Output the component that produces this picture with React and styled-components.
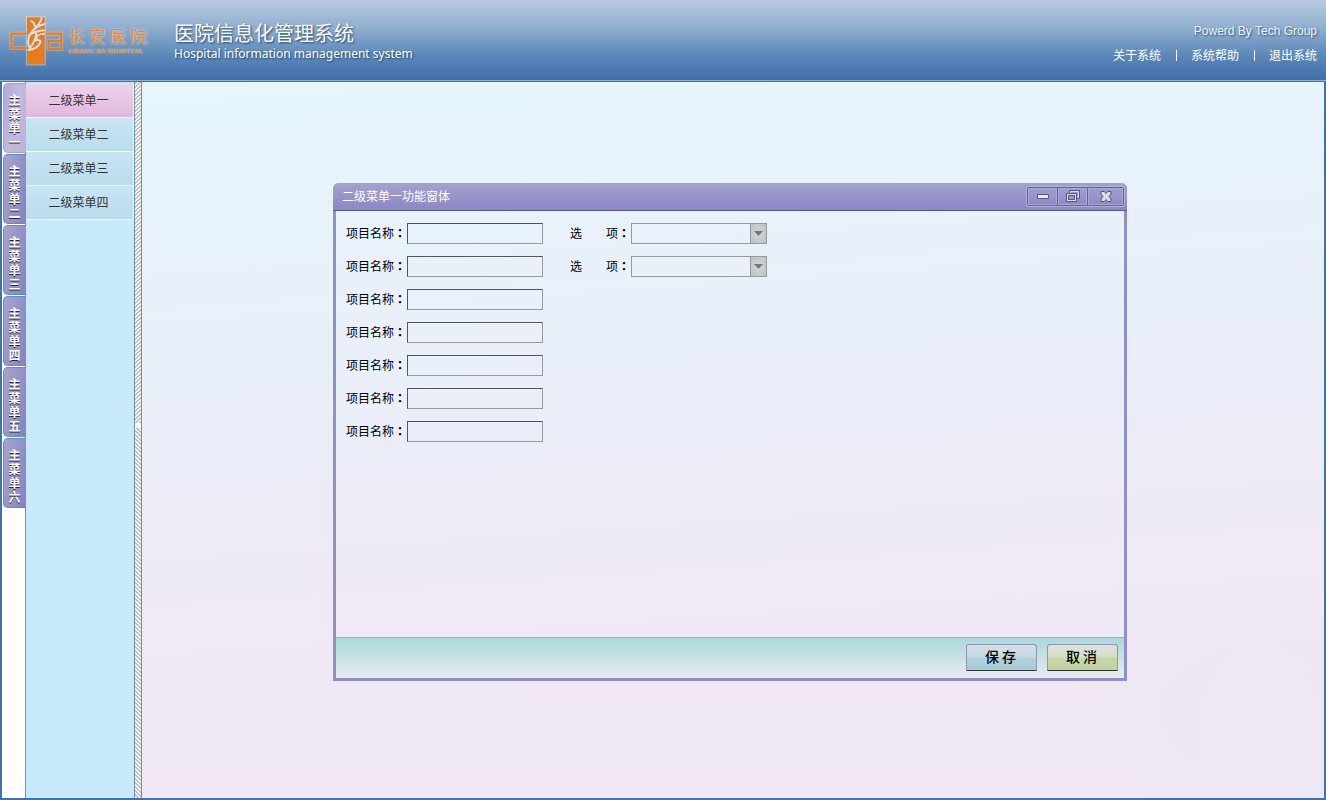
import { useState } from 'react';
import styled, { createGlobalStyle, css } from 'styled-components';

const GlobalStyle = createGlobalStyle`
  *,
  *::before,
  *::after {
    box-sizing: border-box;
  }

  body {
    margin: 0;
    font-family: 'Liberation Sans', 'Noto Sans CJK SC', sans-serif;
    font-size: 12px;
    line-height: 16px;
    color: #000;
  }

  button,
  input,
  select {
    font: inherit;
    color: inherit;
  }
`;

const Page = styled.div`
  display: flex;
  flex-direction: column;
  min-height: 100vh;
  background: #4272aa;
`;

/* Header */

const Header = styled.header`
  display: flex;
  align-items: flex-start;
  height: 81px;
  padding: 14px 9px 0 8px;
  background: linear-gradient(#bacbe0, #8faed0 35%, #5d89ba 68%, #4070a8);
  border-bottom: 1px solid #92aed0;
`;

const Logo = styled.div`
  display: flex;
  align-items: flex-start;
  width: 166px;
  gap: 4px;
  color: #ee8a2c;
`;

const LogoText = styled.div`
  padding-top: 12px;
  white-space: nowrap;
  text-shadow: 0 0 2px rgba(255, 240, 225, 0.8);
`;

const LogoName = styled.div`
  font-family: 'Noto Sans CJK SC', sans-serif;
  font-size: 17px;
  line-height: 20px;
`;

const LogoLatin = styled.div`
  font-family: 'Liberation Serif', serif;
  font-size: 7px;
  font-weight: 700;
  line-height: 10px;
`;

const Heading = styled.div`
  flex: 1;
  padding-top: 7px;
  color: #fff;
  text-shadow: 1px 1px 2px rgba(20, 45, 80, 0.8);
`;

const Title = styled.h1`
  margin: 0;
  font-family: 'Noto Sans CJK SC', sans-serif;
  font-size: 20px;
  font-weight: 400;
  line-height: 24px;
`;

const Subtitle = styled.p`
  margin: 0;
  font-family: 'Noto Sans', sans-serif;
  font-size: 12px;
  line-height: 18px;
`;

const HeaderSide = styled.div`
  display: flex;
  flex-direction: column;
  align-items: flex-end;
  gap: 9px;
  padding-top: 9px;
  color: #fff;
`;

const Powered = styled.div`
  color: #f0f3f8;
  text-shadow: 1px 1px 2px rgba(20, 45, 80, 0.7);
`;

const HeaderNav = styled.nav`
  display: flex;
  align-items: center;
`;

const HeaderLink = styled.a`
  color: #fff;
  text-decoration: none;

  &:not(:last-child)::after {
    content: '';
    display: inline-block;
    width: 1px;
    height: 11px;
    margin: 0 14px 0 15px;
    vertical-align: -1px;
    background: #fff;
  }
`;

/* Left navigation */

const Main = styled.div`
  flex: 1;
  display: flex;
  margin: 1px 2px 2px;
  background: #fff;
`;

const MainMenu = styled.nav`
  display: flex;
  flex-direction: column;
  gap: 1px;
  width: 24px;
  padding: 1px 0 0 1px;
  border-right: 1px solid #6a93c4;
`;

const MainTab = styled.button`
  width: 23px;
  height: 70px;
  padding: 10px 5px 2px 4px;
  border: 1px solid #5f8fc2;
  border-right: none;
  border-radius: 5px 0 0 5px;
  background: linear-gradient(100deg, #a5a5cf, #9594c8 50%, #8482c0);
  color: #fff;
  font-weight: 700;
  line-height: 14px;
  text-shadow: 0 1px 0 #25253c;
  cursor: pointer;

  ${({ $active }) =>
    $active &&
    css`
      border-color: #a99fd3;
      background: linear-gradient(100deg, #b0a8da, #c2b9e0 50%, #bcb2d9);
    `}
`;

const SubMenu = styled.nav`
  width: 108px;
  padding-top: 2px;
  background: #c8e9fb;
`;

const SubItem = styled.button`
  display: block;
  width: 100%;
  height: 34px;
  padding: 0 2px 0 0;
  border: solid #f4fbff;
  border-width: 0 1px 1px 0;
  background: ${({ $active }) =>
    $active ? 'linear-gradient(#ecd3ea, #e1b7dd)' : 'linear-gradient(#c8e5f3, #b9dcec)'};
  color: #333;
  cursor: pointer;
`;

const Splitter = styled.div`
  display: flex;
  flex-direction: column;
  align-items: flex-end;
  width: 8px;
  border: solid #6a93c4;
  border-width: 0 1px;
`;

const Hatch = styled.div`
  flex: ${({ $grow }) => $grow};
  width: 100%;
  background: linear-gradient(
      ${({ $angle }) => $angle},
      #bdbdbd 25%,
      #fff 25%,
      #fff 50%,
      #bdbdbd 50%,
      #bdbdbd 75%,
      #fff 75%
    )
    0 0 / 4px 4px;
`;

const Grip = styled.div`
  width: 100%;
  height: 5px;
  background: #fff;
`;

/* Workspace and window */

const Workspace = styled.main`
  flex: 1;
  display: flex;
  min-width: 0;
  padding: 101px 197px 117px 191px;
  background: radial-gradient(90px 130px at 95% 92%, rgba(238, 232, 243, 0.9) 60%, transparent),
    radial-gradient(220px 120px at 97% 88%, rgba(225, 226, 238, 0.5), transparent),
    linear-gradient(176deg, #e5f6fd, #e8f2fb 22%, #eaeef8 45%, #eeeaf5 62%, #f0e9f5 80%);
`;

const Window = styled.section`
  flex: 1;
  display: flex;
  flex-direction: column;
  min-width: 0;
  border: solid #9090c8;
  border-width: 0 3px 3px;
  border-radius: 6px 6px 0 0;
`;

const TitleBar = styled.header`
  display: flex;
  align-items: center;
  justify-content: space-between;
  height: 28px;
  margin: 0 -3px;
  padding: 0 3px 0 9px;
  border-bottom: 1px solid #5a569c;
  border-radius: 6px 6px 0 0;
  background: linear-gradient(#a3a2cf, #8a87c3);
`;

const WindowTitle = styled.h2`
  margin: 0;
  color: #fff;
  font-size: 12px;
  font-weight: 400;
`;

const WindowControls = styled.div`
  display: flex;
  height: 19px;
  border: 1px solid #625fa5;
  border-radius: 2px;
  box-shadow: 0 0 0 1px #b5b3dc;
`;

const ControlButton = styled.button`
  display: flex;
  align-items: center;
  justify-content: center;
  width: ${({ $wide }) => ($wide ? '35px' : '29px')};
  padding: 0;
  border: 1px solid #aaa8d7;
  background: linear-gradient(#a09ecd, #8e8bc5);
  cursor: pointer;

  &:not(:last-child) {
    box-shadow: 1px 0 0 #625fa5;
    margin-right: 1px;
  }
`;

const Form = styled.form`
  flex: 1;
  display: flex;
  flex-direction: column;
`;

const Fields = styled.div`
  flex: 1;
  display: flex;
  flex-direction: column;
  gap: 12px;
  padding: 12px 10px;
`;

const FieldRow = styled.div`
  display: flex;
  gap: 27px;
`;

const Field = styled.div`
  display: flex;
  align-items: center;
`;

const Label = styled.label`
  width: 61px;
  white-space: pre;
`;

const Colon = styled.span`
  font-family: 'Noto Sans CJK TC', sans-serif;
  font-weight: 700;
`;

const TextInput = styled.input`
  width: 136px;
  height: 21px;
  padding: 0 4px;
  border: 1px solid;
  border-color: #555 #999 #999 #555;
  border-radius: 0;
  background: transparent;
`;

const SelectBox = styled.div`
  display: grid;
  grid-template-columns: 1fr 17px;
  width: 136px;
  height: 21px;
`;

const Select = styled.select`
  grid-area: 1 / 1 / 2 / 3;
  appearance: none;
  padding: 0 20px 0 4px;
  border: 1px solid #999;
  border-radius: 0;
  background: transparent;
`;

const SelectArrow = styled.span`
  grid-area: 1 / 2;
  display: flex;
  align-items: center;
  justify-content: center;
  border: 1px solid #999;
  background: radial-gradient(#d2dadc, #b6c3c4);
  pointer-events: none;
`;

const Footer = styled.footer`
  display: flex;
  justify-content: flex-end;
  gap: 10px;
  height: 41px;
  padding: 6px;
  border-top: 1px solid #8fb5bd;
  background: linear-gradient(#aad9dd, #e8ecec);
`;

const FooterButton = styled.button`
  width: 71px;
  height: 27px;
  padding: 0 2px 3px 0;
  border: 1px solid #9095b5;
  border-bottom-color: #333;
  border-radius: 3px 3px 0 0;
  background: ${({ $green }) =>
    $green
      ? 'linear-gradient(#dfe3db, #d4dec6 48%, #c6d8a8 52%, #bfd39d)'
      : 'linear-gradient(#d7dfe5, #c5d9e0 48%, #b0d3dc 52%, #a5ccd5)'};
  font-family: 'Noto Sans CJK SC', sans-serif;
  font-size: 14px;
  font-weight: 500;
  line-height: 20px;
  cursor: pointer;
`;

const mainMenus = ['主菜单一', '主菜单二', '主菜单三', '主菜单四', '主菜单五', '主菜单六'];
const subMenus = ['二级菜单一', '二级菜单二', '二级菜单三', '二级菜单四'];
const rows = [true, true, false, false, false, false, false];

function LogoMark() {
  return (
    <svg width='56' height='52' viewBox='24 42 168 156' fill='none' aria-hidden='true'>
      <g stroke='#f6e6da' strokeWidth='11' strokeOpacity='0.45'>
        <path d='M80 101H34v43h46M135 101h49v46h-38v-24h34' />
        <path d='M83 54h49v137H83z' />
      </g>
      <path d='M81 52h53v141H81z' fill='#e87b1a' />
      <path
        d='M80 101H34v43h46M135 101h49v46h-38v-24h34'
        stroke='#e87b1a'
        strokeWidth='7'
      />
      {/* running figure cut out of the cross */}
      <path
        d='M125 54c-5 16-13 26-25 36M94 64c7 3 11 8 10 15M134 72c-18 4-34 14-43 30-9 15-8 32-1 44M86 106c14-9 28-14 46-15M110 94c-2 20-8 34-20 50M134 101c-16 1-26 8-27 20 12-3 17 1 12 10-6 11-18 17-34 19'
        stroke='#d5deeb'
        strokeWidth='6'
        strokeLinecap='round'
      />
      <path d='M112 110l14-7-4 12z' fill='#e87b1a' />
    </svg>
  );
}

function MinimizeIcon() {
  return (
    <svg width='12' height='5' aria-hidden='true'>
      <path d='M.5.5h11v4H.5z' fill='#eee' stroke='#56528f' />
    </svg>
  );
}

function RestoreIcon() {
  return (
    <svg width='14' height='13' fill='none' aria-hidden='true'>
      <path d='M3.5 3V.5h10v8H11' stroke='#56528f' />
      <path d='M4.5 3V1.5h8v6H11' stroke='#ddd' />
      <path d='M.5 3.5h10v8H.5z' fill='#ddd' stroke='#56528f' />
      <path d='M2.5 5.5h6v4h-6z' fill='#9997ca' stroke='#56528f' />
    </svg>
  );
}

function CloseIcon() {
  return (
    <svg width='12' height='11' aria-hidden='true'>
      <path
        d='M1 .5h3.500L6 2.500 7.500.5H11v2.500L9 5.500l2 2.500v2.500H7.500L6 8.500l-1.500 2H1V8l2-2.500L1 3z'
        fill='#ddd'
        stroke='#56528f'
      />
    </svg>
  );
}

function TextField({ id }) {
  return (
    <Field>
      <Label htmlFor={id}>
        项目名称<Colon>：</Colon>
      </Label>
      <TextInput id={id} type='text' />
    </Field>
  );
}

function SelectField({ id }) {
  return (
    <Field>
      <Label htmlFor={id}>
        选{'\u3000\u3000'}项<Colon>：</Colon>
      </Label>
      <SelectBox>
        <Select id={id}>
          <option value='' />
        </Select>
        <SelectArrow>
          <svg width='9' height='5' aria-hidden='true'>
            <path d='M0 0h9L4.500 5z' fill='#777' />
          </svg>
        </SelectArrow>
      </SelectBox>
    </Field>
  );
}

function App() {
  const [activeMain, setActiveMain] = useState(0);
  const [activeSub, setActiveSub] = useState(0);

  return (
    <Page>
      <GlobalStyle />
      <Header>
        <Logo>
          <LogoMark />
          <LogoText>
            <LogoName>长 安 医 院</LogoName>
            <LogoLatin>CHANG AN HOSPITAL</LogoLatin>
          </LogoText>
        </Logo>
        <Heading>
          <Title>医院信息化管理系统</Title>
          <Subtitle>Hospital information management system</Subtitle>
        </Heading>
        <HeaderSide>
          <Powered>Powerd By Tech Group</Powered>
          <HeaderNav>
            <HeaderLink href='#about'>关于系统</HeaderLink>
            <HeaderLink href='#help'>系统帮助</HeaderLink>
            <HeaderLink href='#exit'>退出系统</HeaderLink>
          </HeaderNav>
        </HeaderSide>
      </Header>

      <Main>
        <MainMenu>
          {mainMenus.map((name, i) => (
            <MainTab key={name} $active={i === activeMain} onClick={() => setActiveMain(i)}>
              {name}
            </MainTab>
          ))}
        </MainMenu>
        <SubMenu>
          {subMenus.map((name, i) => (
            <SubItem key={name} $active={i === activeSub} onClick={() => setActiveSub(i)}>
              {name}
            </SubItem>
          ))}
        </SubMenu>
        <Splitter>
          <Hatch $grow={48} $angle='135deg' />
          <Grip />
          <Hatch $grow={52} $angle='45deg' />
        </Splitter>

        <Workspace>
          <Window>
            <TitleBar>
              <WindowTitle>{subMenus[activeSub]}功能窗体</WindowTitle>
              <WindowControls>
                <ControlButton aria-label='最小化'>
                  <MinimizeIcon />
                </ControlButton>
                <ControlButton aria-label='还原'>
                  <RestoreIcon />
                </ControlButton>
                <ControlButton $wide aria-label='关闭'>
                  <CloseIcon />
                </ControlButton>
              </WindowControls>
            </TitleBar>
            <Form onSubmit={(e) => e.preventDefault()}>
              <Fields>
                {rows.map((hasOption, i) => (
                  <FieldRow key={i}>
                    <TextField id={`name-${i}`} />
                    {hasOption && <SelectField id={`option-${i}`} />}
                  </FieldRow>
                ))}
              </Fields>
              <Footer>
                <FooterButton type='submit'>保 存</FooterButton>
                <FooterButton type='reset' $green>
                  取 消
                </FooterButton>
              </Footer>
            </Form>
          </Window>
        </Workspace>
      </Main>
    </Page>
  );
}

export default App;
